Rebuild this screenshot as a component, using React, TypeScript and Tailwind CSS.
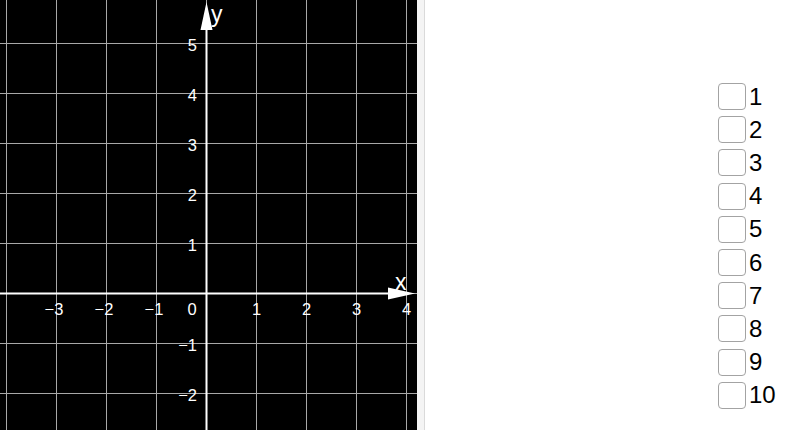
const X0 = 206;
const Y0 = 293;
const STEP = 50;

const xs = [-4, -3, -2, -1, 0, 1, 2, 3, 4];
const ys = [5, 4, 3, 2, 1, 0, -1, -2, -3];

function Graph() {
  return (
    <svg width="417" height="430" viewBox="0 0 417 430" className="block shrink-0 bg-black">
      {/* grid */}
      {xs.map((k) => (
        <line key={'v' + k} x1={X0 + k * STEP + 0.5} y1={0} x2={X0 + k * STEP + 0.5} y2={430} stroke="#a8a8a8" strokeWidth={1} />
      ))}
      {ys.map((k) => (
        <line key={'h' + k} x1={0} y1={Y0 - k * STEP + 0.5} x2={417} y2={Y0 - k * STEP + 0.5} stroke="#a8a8a8" strokeWidth={1} />
      ))}

      {/* axes */}
      <line x1={X0 + 0.5} y1={430} x2={X0 + 0.5} y2={20} stroke="#fff" strokeWidth={2} />
      <line x1={0} y1={Y0 + 0.5} x2={398} y2={Y0 + 0.5} stroke="#fff" strokeWidth={2} />
      <polygon points={`${X0 + 0.5},2 ${X0 - 5.5},30 ${X0 + 6.5},30`} fill="#fff" />
      <polygon points={`415,${Y0 + 0.5} 388,${Y0 - 5.5} 388,${Y0 + 6.5}`} fill="#fff" />

      <g fontFamily="'Liberation Sans', Arial, sans-serif" fill="#fff">
        <text x={211} y={22} fontSize={23}>y</text>
        <text x={395} y={290} fontSize={23}>x</text>

        {[5, 4, 3, 2, 1, -1, -2].map((k) => (
          <text key={'yl' + k} x={197} y={Y0 - k * STEP + 7.5} fontSize={16.5} textAnchor="end">
            {k < 0 ? '\u2212' + -k : k}
          </text>
        ))}
        {[-3, -2, -1, 1, 2, 3, 4].map((k) => (
          <text key={'xl' + k} x={X0 + k * STEP + (k < 0 ? -2 : 0.5)} y={315} fontSize={16.5} textAnchor="middle">
            {k < 0 ? '\u2212' + -k : k}
          </text>
        ))}
        <text x={192} y={315} fontSize={16.5} textAnchor="middle">0</text>
      </g>
    </svg>
  );
}

export default function App() {
  const items = Array.from({ length: 10 }, (_, i) => i + 1);
  return (
    <div className="flex h-[430px] w-[790px] overflow-hidden bg-white">
      <Graph />
      <div className="w-[7px] shrink-0 bg-[#f4f4f4]" />
      <div className="w-px shrink-0 bg-[#dadada]" />
      <div className="flex-1 pl-[293px] pt-[80px]">
        <div className="flex flex-col">
          {items.map((n) => (
            <label key={n} className="flex h-[33.2px] items-center gap-[3px]">
              <span className="h-[27px] w-[28px] shrink-0 rounded-[4px] border-[1.5px] border-[#a3a3a3] bg-white" />
              <span className="font-['Liberation_Sans',Arial,sans-serif] text-[24px] leading-none text-black">
                {n}
              </span>
            </label>
          ))}
        </div>
      </div>
    </div>
  );
}
